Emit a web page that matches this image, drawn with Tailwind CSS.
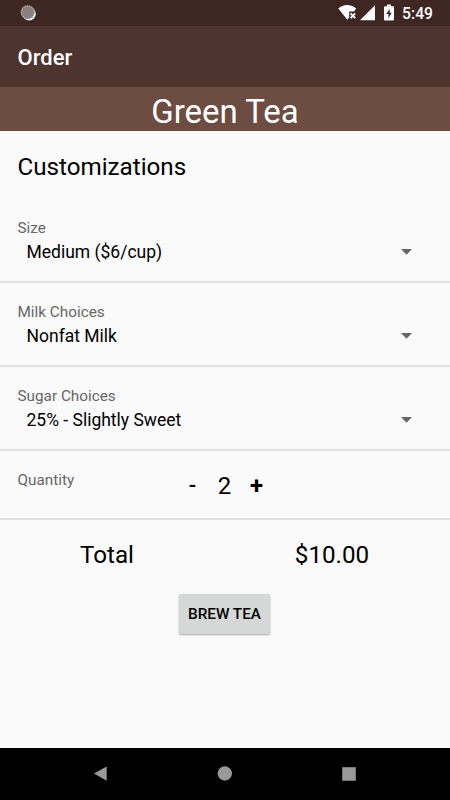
<!DOCTYPE html>
<html lang="en">
<head>
    <meta charset="UTF-8">
    <meta name="viewport" content="width=device-width, initial-scale=1.0">
    <title>Order</title>
    <script src="https://cdn.jsdelivr.net/npm/@tailwindcss/browser@4"></script>
</head>
<body class="bg-[#fafafa] text-black font-['Roboto',sans-serif]">

    <div id="app-container" class="w-[450px] h-[800px] flex flex-col overflow-hidden">
        <!-- Status bar -->
        <div class="h-[26px] shrink-0 bg-[#3e2723] flex items-center justify-between pl-5 pr-[17px] text-white">
            <svg class="w-4 h-4" viewBox="0 0 16 16">
                <circle cx="9" cy="8.7" r="6.8" fill="#fff"/>
                <circle cx="7.7" cy="7.2" r="7" fill="#8b7d7a"/>
                <circle cx="7.7" cy="7.2" r="6.2" fill="none" stroke="#b8afad" stroke-width="1.2" stroke-dasharray="1 1"/>
            </svg>
            <div class="flex items-center">
                <svg class="w-[20px] h-[17px]" viewBox="0 0 20 17">
                    <path d="M0.3 4.6C5.4 -0.2 13 -0.2 18.2 4.6L16 7.5H11.2V13.6L9.3 15.8Z" fill="#fff"/>
                    <path d="M12.6 9.3l4.6 4.8M17.2 9.3l-4.6 4.8" stroke="#fff" stroke-width="1.8"/>
                </svg>
                <svg class="w-4 h-4 ml-[2px]" viewBox="0 0 16 16">
                    <path d="M15 0.3V15.3H0Z" fill="#fff"/>
                </svg>
                <svg class="w-[10px] h-[17px] ml-[8px]" viewBox="0 0 10 17">
                    <path d="M3 0.5h4v1.7h2a1 1 0 0 1 1 1V15.4a1 1 0 0 1-1 1H1a1 1 0 0 1-1-1V3.2a1 1 0 0 1 1-1h2z" fill="#fff"/>
                    <path d="M5.7 4.7L2.3 10H4.5V14.2L7.7 8.7H5.7z" fill="#3e2723"/>
                </svg>
                <span class="ml-2 pt-[2px] text-[15.7px] leading-none font-medium">5:49</span>
            </div>
        </div>

        <!-- App bar -->
        <header class="h-[61px] shrink-0 bg-[#4e342e] flex items-center pl-[17.5px]">
            <h1 class="pt-[2px] text-[22px] leading-none font-medium text-white">Order</h1>
        </header>
        <div class="h-[44px] shrink-0 bg-[#6d4c41] flex items-center justify-center">
            <h2 class="text-[33px] leading-none text-white pt-1">Green Tea</h2>
        </div>

        <main class="grow">
            <h3 class="h-[68px] pl-[17.5px] pt-[21px] text-[24.2px] leading-[30px]">Customizations</h3>

            <section class="h-[84px] border-b-2 border-[#e0e0e0] pt-[19px] pl-[17.5px] pr-[38px]">
                <p class="text-[15.3px] leading-[20px] text-[#666]">Size</p>
                <div class="flex items-center justify-between pl-[9px] h-[27px]">
                    <span class="pt-px text-[17.5px]">Medium ($6/cup)</span>
                    <svg class="w-[11px] h-[6px]" viewBox="0 0 11 6"><path d="M0 0h11L5.5 5.7z" fill="#666"/></svg>
                </div>
            </section>

            <section class="h-[84px] border-b-2 border-[#e0e0e0] pt-[19px] pl-[17.5px] pr-[38px]">
                <p class="text-[15.3px] leading-[20px] text-[#666]">Milk Choices</p>
                <div class="flex items-center justify-between pl-[9px] h-[27px]">
                    <span class="pt-px text-[17.5px]">Nonfat Milk</span>
                    <svg class="w-[11px] h-[6px]" viewBox="0 0 11 6"><path d="M0 0h11L5.5 5.7z" fill="#666"/></svg>
                </div>
            </section>

            <section class="h-[84px] border-b-2 border-[#e0e0e0] pt-[19px] pl-[17.5px] pr-[38px]">
                <p class="text-[15.3px] leading-[20px] text-[#666]">Sugar Choices</p>
                <div class="flex items-center justify-between pl-[9px] h-[27px]">
                    <span class="pt-px text-[17.5px]">25% - Slightly Sweet</span>
                    <svg class="w-[11px] h-[6px]" viewBox="0 0 11 6"><path d="M0 0h11L5.5 5.7z" fill="#666"/></svg>
                </div>
            </section>

            <section class="h-[69px] border-b-2 border-[#e0e0e0] pt-[19px] pl-[17.5px] flex items-start">
                <p class="w-[154px] text-[15.3px] leading-[20px] text-[#666]">Quantity</p>
                <div class="flex text-[24px] leading-[32px] text-center">
                    <button class="w-[42px] text-[22px] font-medium">-</button>
                    <span class="w-[22px]">2</span>
                    <button class="w-[42px] font-bold">+</button>
                </div>
            </section>

            <div class="grid grid-cols-2 pt-[19px] text-[24.2px] leading-[32px] text-center">
                <span class="pr-[11px]">Total</span>
                <span class="pr-[11px]">$10.00</span>
            </div>

            <div class="flex justify-center pt-[23px] pr-px">
                <button class="w-[91px] h-[40px] rounded-xs bg-[#d6d7d7] text-[15.3px] font-medium shadow-[0_1px_2px_rgba(0,0,0,0.35)]">BREW TEA</button>
            </div>
        </main>

        <!-- Navigation bar -->
        <nav class="h-[52px] shrink-0 bg-black flex items-center justify-between px-[94px]">
            <svg class="w-[14px] h-4" viewBox="0 0 14 16"><path d="M12.7 0.5V14.7L0 7.6z" fill="#999"/></svg>
            <svg class="w-4 h-4" viewBox="0 0 16 16"><circle cx="7.8" cy="7.5" r="7.2" fill="#999"/></svg>
            <svg class="w-[14px] h-[14px]" viewBox="0 0 14 14"><path d="M0.2 0.2h13.6v13.6H0.2z" fill="#999"/></svg>
        </nav>
    </div>

</body>
</html>
